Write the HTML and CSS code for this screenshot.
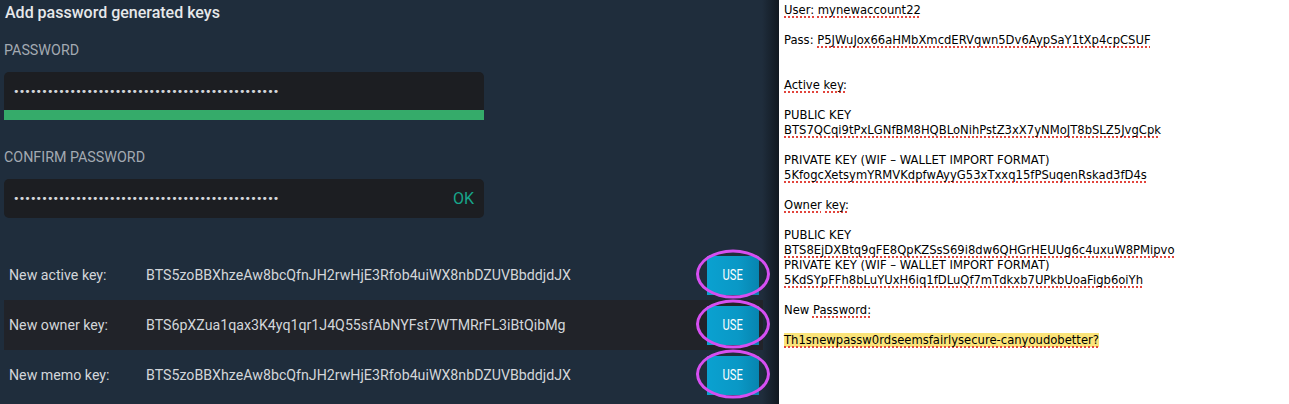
FILE: index.html
```html
<!DOCTYPE html>
<html lang="en">
<head>
  <meta charset="UTF-8">
  <meta name="viewport" content="width=device-width, initial-scale=1.0">
  <title>Add password generated keys</title>
  <link rel="stylesheet" href="styles.css">
</head>
<body>
  <div class="page">
    <section class="keys-panel">
      <h2 class="title">Add password generated keys</h2>

      <div class="field-label">PASSWORD</div>
      <div class="pw-box top-box">
        <span class="dots">•••••••••••••••••••••••••••••••••••••••••••••••</span>
      </div>
      <div class="strength-bar"></div>

      <div class="field-label confirm-label">CONFIRM PASSWORD</div>
      <div class="pw-box">
        <span class="dots">•••••••••••••••••••••••••••••••••••••••••••••••</span>
        <span class="ok">OK</span>
      </div>

      <div class="key-list">
        <div class="key-row">
          <span class="key-label">New active key:</span>
          <span class="key-value">BTS5zoBBXhzeAw8bcQfnJH2rwHjE3Rfob4uiWX8nbDZUVBbddjdJX</span>
          <span class="use-wrap"><button class="use-btn"><span>USE</span></button></span>
        </div>
        <div class="key-row alt">
          <span class="key-label">New owner key:</span>
          <span class="key-value">BTS6pXZua1qax3K4yq1qr1J4Q55sfAbNYFst7WTMRrFL3iBtQibMg</span>
          <span class="use-wrap"><button class="use-btn"><span>USE</span></button></span>
        </div>
        <div class="key-row">
          <span class="key-label">New memo key:</span>
          <span class="key-value">BTS5zoBBXhzeAw8bcQfnJH2rwHjE3Rfob4uiWX8nbDZUVBbddjdJX</span>
          <span class="use-wrap"><button class="use-btn"><span>USE</span></button></span>
        </div>
      </div>
    </section>

    <section class="notes">
      <p class="gap1"><span class="sp">User:</span> <span class="sp">mynewaccount22</span></p>
      <p class="gap2">Pass: <span class="sp">P5JWuJox66aHMbXmcdERVqwn5Dv6AypSaY1tXp4cpCSUF</span></p>
      <p class="gap1"><span class="sp">Active</span> <span class="sp">key:</span></p>
      <p>PUBLIC KEY</p>
      <p class="gap1"><span class="sp">BTS7QCqi9tPxLGNfBM8HQBLoNihPstZ3xX7yNMoJT8bSLZ5JvgCpk</span></p>
      <p>PRIVATE KEY (WIF – WALLET IMPORT FORMAT)</p>
      <p class="gap1"><span class="sp">5KfogcXetsymYRMVKdpfwAyyG53xTxxq15fPSuqenRskad3fD4s</span></p>
      <p class="gap1"><span class="sp">Owner</span> <span class="sp">key:</span></p>
      <p>PUBLIC KEY</p>
      <p><span class="sp">BTS8EjDXBtq9qFE8QpKZSsS69i8dw6QHGrHEUUg6c4uxuW8PMipvo</span></p>
      <p>PRIVATE KEY (WIF – WALLET IMPORT FORMAT)</p>
      <p class="gap1"><span class="sp">5KdSYpFFh8bLuYUxH6iq1fDLuQf7mTdkxb7UPkbUoaFigb6oiYh</span></p>
      <p class="gap1">New <span class="sp">Password:</span></p>
      <p><span class="sp mark">Th1snewpassw0rdseemsfairlysecure-canyoudobetter?</span></p>
    </section>
  </div>
</body>
</html>
```

FILE: styles.css
```css
body {
  margin: 0;
  padding: 0;
  background-color: #ffffff;
}

.page {
  display: flex;
  height: 404px;
}

/* left: dark wallet panel */
.keys-panel {
  width: 779px;
  flex-shrink: 0;
  box-sizing: border-box;
  padding: 0 16px 0 4px;
  background: linear-gradient(to right, #1f2d3c calc(100% - 17px), #111820 100%);
  font-family: Roboto, "Liberation Sans", sans-serif;
  overflow: hidden;
}

.title {
  margin: 3px 0 0 1px;
  font-size: 16px;
  line-height: 20px;
  font-weight: 500;
  color: #e6e8ea;
}

.field-label {
  margin-top: 19px;
  font-size: 14.3px;
  line-height: 17px;
  color: #a3aab2;
}

.confirm-label {
  margin-top: 29px;
}

.pw-box {
  width: 480px;
  height: 39px;
  margin-top: 13px;
  box-sizing: border-box;
  padding: 0 10px 0 9px;
  display: flex;
  align-items: center;
  justify-content: space-between;
  background-color: #1c1e22;
  border-radius: 5px;
}

.pw-box.top-box {
  height: 38px;
  border-radius: 5px 5px 0 0;
}

.strength-bar {
  width: 480px;
  height: 10px;
  background-color: #35ab6a;
}

.dots {
  font-family: "DejaVu Sans", sans-serif;
  font-size: 11px;
  letter-spacing: -0.84px;
  color: #d4d7db;
}

.ok {
  font-size: 16px;
  color: #17a68b;
}

.key-list {
  margin-top: 32px;
}

.key-row {
  height: 50px;
  display: flex;
  align-items: center;
  padding: 0 4px 0 5px;
  font-size: 14.2px;
  color: #d3d6da;
}

.key-row.alt {
  background-color: #212329;
}

.key-label {
  width: 137px;
}

.key-value {
  flex: 1;
}

.use-wrap {
  position: relative;
}

.use-btn {
  display: block;
  width: 52px;
  height: 39px;
  border: none;
  padding: 0;
  background: linear-gradient(to right, #0aa1d0, #0a98c6 60%, #0785b0);
  color: #ffffff;
  font-family: Roboto, "Liberation Sans", sans-serif;
  font-size: 14px;
}

.use-btn span {
  display: inline-block;
  transform: scaleX(0.8);
}

/* magenta annotation ring */
.use-wrap::after {
  content: "";
  position: absolute;
  left: 50%;
  top: 50%;
  width: 68px;
  height: 43px;
  transform: translate(-50%, -52%);
  border: 3px solid #d64ff2;
  border-radius: 50%;
}

/* right: text notes */
.notes {
  flex: 1;
  padding: 3px 0 0 5px;
  font-family: "DejaVu Sans", sans-serif;
  font-size: 11.6px;
  line-height: 15px;
  color: #000000;
}

.notes p {
  margin: 0;
  white-space: nowrap;
}

.notes .gap1 {
  margin-bottom: 15px;
}

.notes .gap2 {
  margin-bottom: 30px;
}

.sp {
  text-decoration: underline dotted #e2453c;
  text-decoration-thickness: 2px;
  text-underline-offset: 2px;
}

.mark {
  background-color: #fbe47a;
}
```
